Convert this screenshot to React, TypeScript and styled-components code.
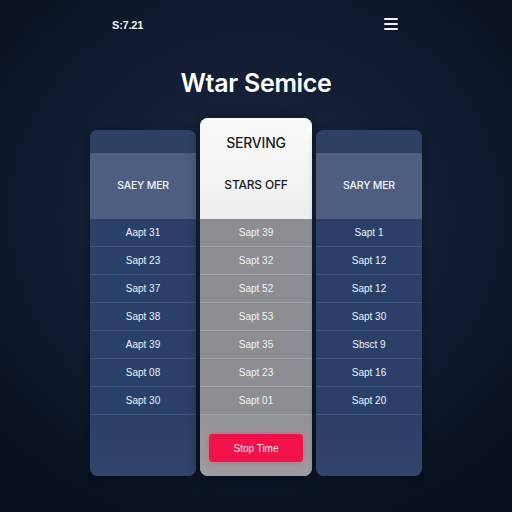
import React from "react";
import styled, { createGlobalStyle } from "styled-components";

const GlobalStyle = createGlobalStyle`
  html, body {
    margin: 0;
    padding: 0;
    background: #0a1120;
  }
  * { box-sizing: border-box; }
`;

const Screen = styled.div`
  width: 512px;
  height: 512px;
  overflow: hidden;
  display: flex;
  flex-direction: column;
  align-items: center;
  font-family: "Liberation Sans", Arial, sans-serif;
  background: radial-gradient(ellipse 70% 65% at 50% 42%, #1b2943 0%, #121d33 50%, #080f1d 100%);
`;

const TopBar = styled.div`
  width: 100%;
  height: 50px;
  display: flex;
  justify-content: space-between;
  align-items: center;
  padding: 0 114px 0 112px;
`;

const Clock = styled.span`
  color: #eef1f6;
  font-size: 11px;
  font-weight: 700;
  letter-spacing: -0.2px;
`;

const Menu = styled.div`
  width: 14px;
  display: flex;
  flex-direction: column;
  gap: 3px;
  margin-top: -2px;
  span {
    display: block;
    height: 2px;
    border-radius: 1px;
    background: #f2f4f8;
  }
`;

const Title = styled.h1`
  margin: 20px 0 0;
  color: #ffffff;
  font-family: Inter, "Liberation Sans", sans-serif;
  font-size: 25px;
  font-weight: 600;
  line-height: 26px;
  letter-spacing: -0.3px;
`;

const Columns = styled.div`
  margin-top: 22px;
  display: flex;
  align-items: flex-end;
  gap: 4px;
`;

const Column = styled.div<{ $featured?: boolean }>`
  width: ${(p) => (p.$featured ? 112 : 106)}px;
  height: ${(p) => (p.$featured ? 358 : 346)}px;
  border-radius: 8px;
  overflow: hidden;
  display: flex;
  flex-direction: column;
  background: ${(p) => (p.$featured ? "#97989c" : "#2c4166")};
  box-shadow: ${(p) =>
    p.$featured ? "0 0 14px rgba(0,0,0,0.45)" : "0 2px 8px rgba(0,0,0,0.3)"};
`;

const Cap = styled.div`
  height: 23px;
  background: #2e4164;
`;

const Header = styled.div<{ $featured?: boolean }>`
  height: ${(p) => (p.$featured ? 101 : 66)}px;
  display: flex;
  flex-direction: column;
  align-items: center;
  justify-content: ${(p) => (p.$featured ? "space-between" : "center")};
  padding: ${(p) => (p.$featured ? "18px 0 27px" : "0")};
  background: ${(p) =>
    p.$featured ? "linear-gradient(180deg, #fbfbfb 0%, #eeeeef 100%)" : "#4c5f82"};
  color: ${(p) => (p.$featured ? "#1c1d21" : "#f2f4f8")};
`;

const HeaderLabel = styled.span<{ $size: number }>`
  font-family: Inter, "Liberation Sans", sans-serif;
  font-size: ${(p) => p.$size}px;
  font-weight: 500;
  letter-spacing: -0.2px;
  line-height: 14px;
`;

const Row = styled.div<{ $featured?: boolean }>`
  height: 28px;
  display: flex;
  align-items: center;
  justify-content: center;
  font-size: 10px;
  color: #f1f3f7;
  background: ${(p) => (p.$featured ? "#8c8e93" : "#2a4068")};
  border-bottom: 1px solid ${(p) => (p.$featured ? "#a3a5a9" : "#3c5479")};
`;

const Footer = styled.div<{ $featured?: boolean }>`
  flex: 1;
  display: flex;
  align-items: flex-start;
  justify-content: center;
  padding-top: 19px;
  background: ${(p) =>
    p.$featured
      ? "linear-gradient(180deg, #939498 0%, #9c9da0 100%)"
      : "linear-gradient(180deg, #2b4066 0%, #2f456b 100%)"};
`;

const StopButton = styled.button`
  width: 94px;
  height: 28px;
  border: none;
  border-radius: 4px;
  background: #f2124a;
  color: #fde8ee;
  font-family: "Liberation Sans", Arial, sans-serif;
  font-size: 10px;
  box-shadow: 0 0 6px rgba(242, 18, 74, 0.35);
`;

type Plan = {
  label: string;
  sub?: string;
  rows: string[];
  featured?: boolean;
};

const plans: Plan[] = [
  {
    label: "SAEY MER",
    rows: ["Aapt 31", "Sapt 23", "Sapt 37", "Sapt 38", "Aapt 39", "Sapt 08", "Sapt 30"],
  },
  {
    label: "SERVING",
    sub: "STARS OFF",
    featured: true,
    rows: ["Sapt 39", "Sapt 32", "Sapt 52", "Sapt 53", "Sapt 35", "Sapt 23", "Sapt 01"],
  },
  {
    label: "SARY MER",
    rows: ["Sapt 1", "Sapt 12", "Sapt 12", "Sapt 30", "Sbsct 9", "Sapt 16", "Sapt 20"],
  },
];

export default function App() {
  return (
    <>
      <GlobalStyle />
      <Screen>
        <TopBar>
          <Clock>S:7.21</Clock>
          <Menu>
            <span />
            <span />
            <span />
          </Menu>
        </TopBar>
        <Title>Wtar Semice</Title>
        <Columns>
          {plans.map((plan) => (
            <Column key={plan.label} $featured={plan.featured}>
              {!plan.featured && <Cap />}
              <Header $featured={plan.featured}>
                <HeaderLabel $size={plan.featured ? 14 : 10.5}>{plan.label}</HeaderLabel>
                {plan.sub && <HeaderLabel $size={12}>{plan.sub}</HeaderLabel>}
              </Header>
              {plan.rows.map((r, i) => (
                <Row key={i} $featured={plan.featured}>
                  {r}
                </Row>
              ))}
              <Footer $featured={plan.featured}>
                {plan.featured && <StopButton>Stop Time</StopButton>}
              </Footer>
            </Column>
          ))}
        </Columns>
      </Screen>
    </>
  );
}
